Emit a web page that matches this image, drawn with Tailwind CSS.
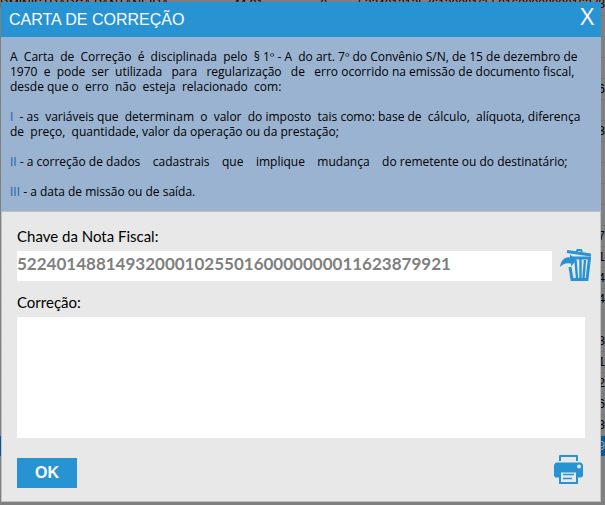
<!DOCTYPE html>
<html lang="pt-BR">
<head>
  <meta charset="UTF-8">
  <meta name="viewport" content="width=device-width, initial-scale=1.0">
  <title>Carta de Correção</title>
  <script src="https://cdn.jsdelivr.net/npm/@tailwindcss/browser@4"></script>
</head>
<body class="relative min-h-screen overflow-hidden bg-[#808080] font-[Lato,sans-serif] text-black">

  <!-- list of notes behind the dialog -->
  <div class="absolute inset-0 overflow-hidden" aria-hidden="true">
    <table class="-mt-[6px] w-full border-collapse font-['Liberation_Sans',sans-serif] text-xs leading-5">
      <tbody id="notes"></tbody>
    </table>
  </div>

  <!-- dialog -->
  <main role="dialog" aria-labelledby="title" class="relative mt-[2px] mr-[4px] mb-[2px] ml-px">
    <header class="flex h-[35px] items-center justify-between bg-[#2793d3] pr-[7px] pl-2 font-['Liberation_Sans',sans-serif] text-white">
      <h1 id="title" class="text-base">CARTA DE CORREÇÃO</h1>
      <button type="button" aria-label="Fechar" class="-mt-2 font-['Open_Sans',sans-serif] text-2xl leading-6">X</button>
    </header>

    <section class="space-y-[15px] bg-[#9ab3d0] pt-[12px] pb-[12px] pl-[9px] font-['Open_Sans',sans-serif] text-xs leading-[15px]">
      <p class="whitespace-pre">A  Carta  de  Correção  é  disciplinada  pelo  § 1º - A  do art. 7º do Convênio S/N, de 15 de dezembro de
1970  e  pode  ser  utilizada   para   regularização   de   erro ocorrido na emissão de documento fiscal,
desde que o  erro  não  esteja  relacionado  com:</p>
      <p class="whitespace-pre"><span class="text-[#1f5fa8]">I</span>  - as  variáveis que  determinam  o  valor  do imposto  tais como: base de  cálculo,  alíquota, diferença
de  preço,  quantidade, valor da operação ou da prestação;</p>
      <p class="whitespace-pre"><span class="text-[#1f5fa8]">II</span> - a correção de dados    cadastrais    que    implique    mudança    do remetente ou do destinatário;</p>
      <p class="whitespace-pre"><span class="text-[#1f5fa8]">III</span> - a data de missão ou de saída.</p>
    </section>

    <form class="border border-[#c0c0c0] bg-[#e8e8e8] px-[15px] pt-[14px] pb-[13px] text-[15px]">
      <label for="chave" class="block leading-5">Chave da Nota Fiscal:</label>
      <div class="mt-[5px] flex items-center gap-2">
        <input id="chave" type="text" value="52240148814932000102550160000000011623879921" class="h-[30px] min-w-0 flex-1 bg-white pb-[6px] text-[17px] font-bold text-[#808080] outline-none">
        <button type="button" aria-label="Excluir" class="-mt-[2px] -mr-[6px]">
          <svg class="block" width="31" height="32" viewBox="0 0 31 32">
            <path d="M7 2.500 31 6" fill="none" stroke="#2793d3" stroke-width="3"/>
            <path d="M16.500 3 17.500 1H21L22 3.500" fill="none" stroke="#2793d3" stroke-width="2"/>
            <path d="M12 9H29.500L27 30.500H12L10 18" fill="none" stroke="#2793d3" stroke-width="3"/>
            <path d="M15.500 11 17 29M20.500 10V29M25 11 23.500 29" fill="none" stroke="#2793d3" stroke-width="2.400"/>
            <path d="M0 18C1 11 5 7.500 10 8.500V5.500L16.500 11 11 17.500V14.500C6 13.500 3 14.500 0 18Z" fill="#2793d3"/>
          </svg>
        </button>
      </div>

      <label for="correcao" class="mt-[11px] block leading-5">Correção:</label>
      <textarea id="correcao" class="mt-[5px] block h-[121px] w-full resize-none bg-white outline-none"></textarea>

      <div class="mt-[17px] flex items-center justify-between">
        <button type="submit" class="mt-[3px] h-[30px] w-[60px] bg-[#2793d3] font-['Liberation_Sans',sans-serif] text-base font-bold text-white">OK</button>
        <button type="button" aria-label="Imprimir" class="-mt-[3px] mr-[2px]">
          <svg class="block" width="29" height="30" viewBox="0 0 29 30">
            <path d="M6 6V1H23V6" fill="none" stroke="#2793d3" stroke-width="2" stroke-linejoin="round"/>
            <path d="M2 7.500H27L29 9.500V21L27.500 22.500H1.500L0 21V9.500Z" fill="#2793d3"/>
            <path d="M6 16.500H23V28H6Z" fill="#e8e8e8" stroke="#2793d3" stroke-width="2"/>
            <path d="M9 19.500H20M9 23.500H18" stroke="#2793d3" stroke-width="1.500"/>
            <circle cx="25" cy="11.500" r="2" fill="#e8e8e8"/>
          </svg>
        </button>
      </div>
    </form>
  </main>

  <script>
    // last digit of the access key in each row, the last row is the selected one
    const digits = ['8', '', '', '', '6', '', '3', '', '', '', '', '7', '1', '4', '4', '', '3', '1', '2', '6', '3', '9'];
    const body = document.getElementById('notes');

    digits.forEach((digit, i) => {
      const row = body.insertRow();
      row.className = i === digits.length - 1
        ? 'h-[21px] bg-[#07599a] text-[#a0a0a0]'
        : 'h-[21px] border-b border-[#767676]';
      const first = i === 0;
      row.innerHTML = `
        <td class="w-[234px] p-0 whitespace-nowrap">${first ? 'DMINISTRADCA PANTANEIRA' : ''}</td>
        <td class="w-[88px] p-0">${first ? '44.91' : ''}</td>
        <td class="w-[38px] p-0">${first ? '0' : ''}</td>
        <td class="p-0 text-right">${first ? '522401213576120001655016000000001637' : ''}${digit}</td>`;
    });
  </script>
</body>
</html>
